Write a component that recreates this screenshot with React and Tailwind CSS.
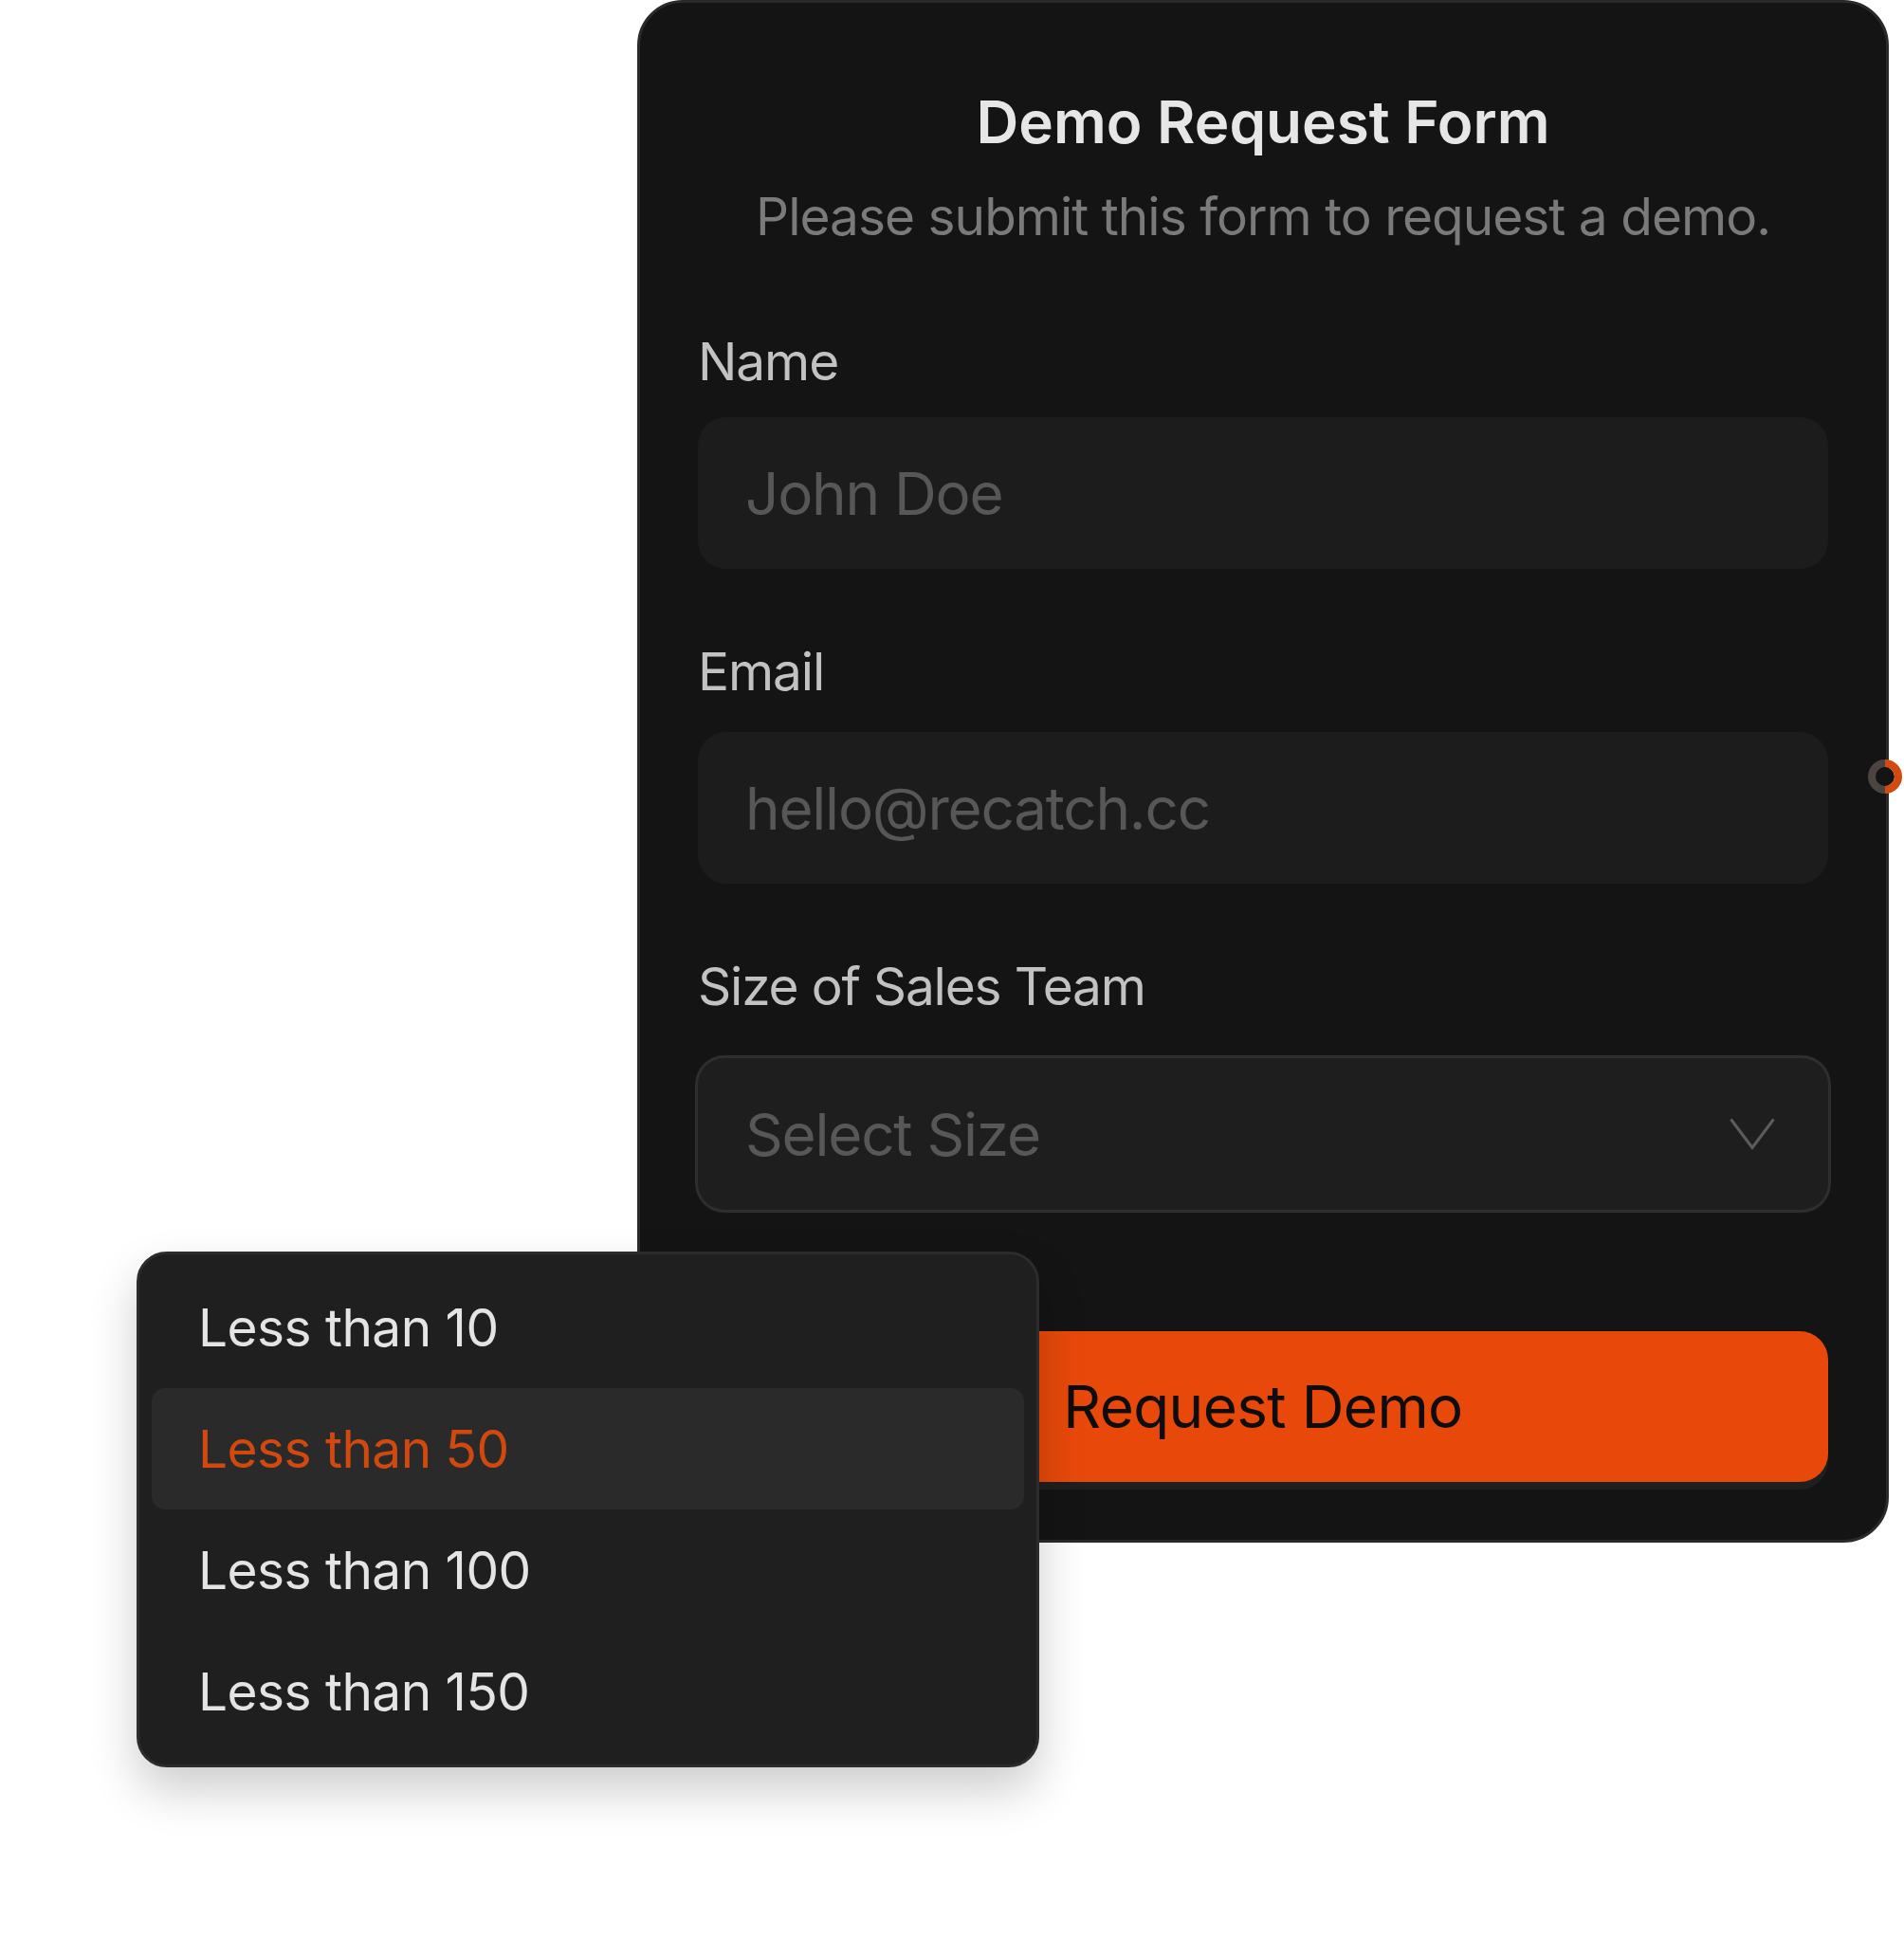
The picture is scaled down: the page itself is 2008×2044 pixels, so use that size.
import React from "react";

const sizes = ["Less than 10", "Less than 50", "Less than 100", "Less than 150"];

function Field({ label, placeholder, labelGap, top }) {
    return (
        <div className={top}>
            <label className="block text-[55px] leading-[66px] tracking-[-0.02em] text-[#c2c2c2]">{label}</label>
            <input
                type="text"
                placeholder={placeholder}
                className={`${labelGap} block h-[160px] w-full rounded-[30px] bg-[#1c1c1c] px-[50px] text-[62px] tracking-[-0.02em] text-[#e6e6e6] placeholder:text-[#575757] outline-none`}
            />
        </div>
    );
}

function SizeDropdown() {
    return (
        <ul className="absolute left-[144px] top-[1320px] w-[952px] rounded-[32px] border-[3px] border-[#2c2c2c] bg-[#1f1f1f] p-[13px] shadow-[0_24px_50px_rgba(0,0,0,0.2)]">
            {sizes.map((s) => {
                const active = s === "Less than 50";
                return (
                    <li
                        key={s}
                        className={
                            active
                                ? "flex h-[128px] items-center rounded-[14px] bg-[#2a2a2a] pl-[49px] text-[55px] tracking-[-0.01em] text-[#d2490f]"
                                : "flex h-[128px] items-center pl-[49px] text-[55px] tracking-[-0.01em] text-[#e4e4e4]"
                        }
                    >
                        {s}
                    </li>
                );
            })}
        </ul>
    );
}

export default function App() {
    return (
        <div className="relative h-[2044px] w-[2008px] overflow-hidden bg-white font-['Inter','Noto_Sans',sans-serif]">
            <div className="ml-[672px] w-[1320px] rounded-[48px] border-[3px] border-[#2a2a2a] bg-[#141414] px-[61px] pt-[88px] pb-[61px]">
                <h1 className="text-center text-[62px] leading-[76px] font-semibold text-[#e6e6e6]">
                    Demo Request Form
                </h1>
                <p className="mt-[28px] text-center text-[55px] leading-[66px] tracking-[-0.018em] text-[#7a7a7a]">
                    Please submit this form to request a demo.
                </p>

                <Field label="Name" placeholder="John Doe" top="mt-[87px]" labelGap="mt-[26px]" />
                <Field label="Email" placeholder="hello@recatch.cc" top="mt-[75px]" labelGap="mt-[31px]" />

                <div className="mt-[75px]">
                    <label className="block text-[55px] leading-[66px] tracking-[-0.022em] text-[#c2c2c2]">Size of Sales Team</label>
                    <div className="mt-[43px] flex h-[160px] items-center justify-between rounded-[28px] bg-[#1e1e1e] pl-[50px] pr-[56px] ring-[3px] ring-[#2e2e2e]">
                        <span className="text-[62px] tracking-[-0.02em] text-[#575757]">Select Size</span>
                        <svg width="48" height="34" viewBox="0 0 48 34" fill="none">
                            <polyline points="1.5,1.5 24,31.5 46.5,1.5" stroke="#5c5c5c" strokeWidth="3" />
                        </svg>
                    </div>
                </div>

                <button className="mt-[128px] flex h-[159px] w-full items-center justify-center rounded-[30px] bg-[#e8490a] text-[62px] tracking-[-0.01em] text-[#0d0d0d] shadow-[0_8px_0_#1f1f1f]">
                    Request Demo
                </button>
            </div>

            {/* progress ring sitting on the card edge */}
            <svg className="absolute left-[1969px] top-[800px]" width="38" height="38" viewBox="0 0 38 38">
                <circle cx="19" cy="19" r="10" fill="#141414" />
                <path d="M19 5 A14 14 0 0 1 19 33" stroke="#d14a10" strokeWidth="8" fill="none" />
                <path d="M19 33 A14 14 0 0 1 19 5" stroke="#4b4441" strokeWidth="8" fill="none" />
            </svg>

            <SizeDropdown />
        </div>
    );
}
